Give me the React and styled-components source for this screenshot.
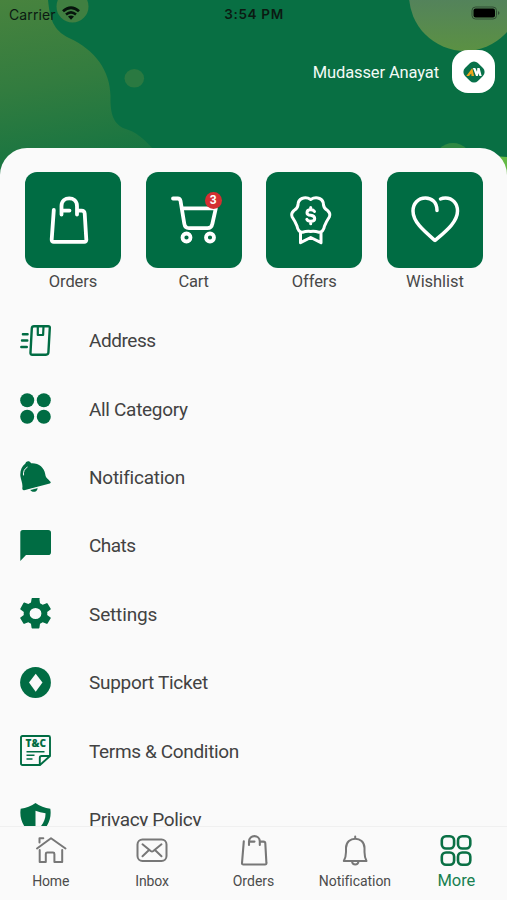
import styled, { createGlobalStyle, css } from 'styled-components';

const GlobalStyle = createGlobalStyle`
    * {
        box-sizing: border-box;
    }

    body {
        margin: 0;
        background-color: #fafafa;
        font-family: Roboto, 'Noto Sans', sans-serif;
    }
`;

const Screen = styled.div`
    position: relative;
    width: 507px;
    height: 900px;
    display: flex;
    flex-direction: column;
    overflow: hidden;
    background-color: #086f43;
`;

const HeaderArt = styled.svg`
    position: absolute;
    top: 0;
    left: 0;
`;

const StatusBar = styled.div`
    position: relative;
    height: 28px;
    padding: 0 6px 0 9px;
    display: grid;
    grid-template-columns: 1fr auto 1fr;
    align-items: center;
    font-family: Inter, sans-serif;
    color: #0b1a12;
`;

const Carrier = styled.div`
    display: flex;
    align-items: center;
    gap: 6px;
    font-size: 14px;
    letter-spacing: 0.1px;

    svg {
        margin-top: -3px;
    }
`;

const Clock = styled.div`
    font-size: 13.5px;
    font-weight: 600;
    letter-spacing: 0.65px;
    margin-right: 2px;
`;

const Battery = styled.svg`
    justify-self: end;
    margin-top: -2px;
`;

const Profile = styled.div`
    position: relative;
    height: 120px;
    padding: 21px 12px 0 0;
    display: flex;
    justify-content: flex-end;
    gap: 13px;
`;

const UserName = styled.div`
    line-height: 47px;
    font-size: 16.5px;
    letter-spacing: ${props => props.$spacing || 0}px;
    color: #f3faf6;
`;

const Avatar = styled.div`
    width: 43px;
    height: 43px;
    margin-top: 1px;
    display: flex;
    align-items: center;
    justify-content: center;
    border-radius: 16px;
    background-color: white;
`;

const Panel = styled.div`
    position: relative;
    flex: 1;
    min-height: 0;
    display: flex;
    flex-direction: column;
    border-radius: 27px 27px 0 0;
    background-color: #fafafa;
    overflow: hidden;
`;

const Tiles = styled.div`
    flex: none;
    height: 158px;
    padding: 24px 24px 0 25px;
    display: flex;
    justify-content: space-between;
`;

const TileItem = styled.div`
    width: 96px;
    display: flex;
    flex-direction: column;
    align-items: center;
`;

const Tile = styled.div`
    position: relative;
    width: 96px;
    height: 96px;
    border-radius: 12px;
    background-color: #006c43;
`;

const Badge = styled.div`
    position: absolute;
    top: 20px;
    left: 59px;
    width: 17px;
    height: 17px;
    border-radius: 50%;
    background-color: #d32f32;
    color: white;
    font-size: 12px;
    font-weight: 700;
    line-height: 17px;
    text-align: center;
`;

const TileLabel = styled.div`
    line-height: 28px;
    white-space: nowrap;
    font-size: 16.5px;
    letter-spacing: ${props => props.$spacing || 0}px;
    color: #484848;
`;

const List = styled.div`
    flex: 1;
    min-height: 0;
    overflow: hidden;
`;

const Row = styled.div`
    height: 68.4px;
    padding-left: 20px;
    display: flex;
    align-items: center;
    gap: 38px;
    color: #006c43;
`;

const RowLabel = styled.div`
    padding-top: 1px;
    white-space: nowrap;
    font-size: 19px;
    letter-spacing: ${props => props.$spacing || 0}px;
    color: #424242;
`;

const NavBar = styled.div`
    flex: none;
    height: 74px;
    display: flex;
    border-top: 1px solid #f0f0f0;
    background-color: #fafafa;
`;

const NavItem = styled.div`
    flex: 1;
    display: flex;
    flex-direction: column;
    align-items: center;
    padding-top: 7px;
    color: #777;

    ${props => props.$active && css`
        color: #0a7045;
    `}
`;

const NavLabel = styled.div`
    margin-top: 2px;
    line-height: 22px;
    white-space: nowrap;
    font-size: ${props => props.$active ? 16.5 : 14}px;
    letter-spacing: ${props => props.$spacing || 0}px;
    color: ${props => props.$active ? '#188050' : '#4c4c4c'};
`;

const TileIcon = ({children}) => (
    <svg width="96" height="96" viewBox="0 0 96 96" fill="none" stroke="white" strokeWidth="3.8" strokeLinecap="round" strokeLinejoin="round">
        {children}
    </svg>
);

const RowIcon = ({children}) => (
    <svg width="31" height="31" viewBox="0 0 31 31" fill="currentColor">{children}</svg>
);

const NavIcon = ({children, width = 2}) => (
    <svg width="34" height="34" viewBox="0 0 34 34" fill="none" stroke="currentColor" strokeWidth={width} strokeLinecap="round" strokeLinejoin="round">
        {children}
    </svg>
);

const tiles = [
    {
        label: 'Orders',
        spacing: -0.1,
        icon: <TileIcon>
            <path d="M28.8 38 L26.7 67.5 Q26.5 69.8 28.8 69.8 H59.2 Q61.5 69.8 61.3 67.5 L59.7 41.5 Q59.5 38.6 56.5 38.6 H52.7 M36.5 42.5 V34 C36.5 23.8 52 23.8 52 34 V42.5 M38 38.6 H44.5" />
        </TileIcon>,
    },
    {
        label: 'Cart',
        spacing: -0.2,
        badge: 3,
        icon: <TileIcon>
            <path d="M27 26.5 H31.8 Q34 26.5 34.5 28.8 L38.3 51.8 Q39 56.2 43 56.2 H61.5 Q65.5 56.2 66.3 52 L69.8 36.3 H36" />
            <circle cx="40.5" cy="65.5" r="4" />
            <circle cx="64" cy="65.5" r="4" />
        </TileIcon>,
    },
    {
        label: 'Offers',
        spacing: -0.1,
        icon: <TileIcon>
            <path strokeWidth="3" d="M44.7 27.5 Q49 24.8 53.5 26.5 Q57.5 28.2 57.5 33 Q58 36.5 61.5 38.5 Q65 41.5 63.3 45 Q60 50 58.5 54 Q57.5 60 53 60.3 Q49 59 44.7 59.5 Q40.5 59 36.5 60.3 Q32 60 31 54 Q29.5 50 26.2 45 Q24.5 41.5 28 38.5 Q31.5 36.5 32 33 Q32 28.2 36 26.5 Q40.5 24.8 44.7 27.5 Z" />
            <path strokeWidth="3" d="M34.5 61 V70.7 L44.7 65.5 L55 70.7 V61" />
            <path strokeWidth="3" d="M48.5 39.5 Q47.5 37.8 44.7 37.8 Q41 37.8 41 40.7 Q41 43 44.7 43.2 Q48.7 43.8 48.7 46.5 Q48.7 49.3 44.7 49.3 Q41.5 49.3 40.8 47.3 M44.7 35.5 V37.5 M44.7 49.5 V51.7" />
        </TileIcon>,
    },
    {
        label: 'Wishlist',
        spacing: -0.05,
        icon: <TileIcon>
            <path strokeWidth="3.5" d="M50 38.5 C50 30 44.5 26 38.5 26 C31 26 26 31.5 26 39 C26 50 37 59 48 68.5 C59 59 70.5 50 70.5 39 C70.5 31.5 65.5 26 58.5 26 Q55.5 26 53.5 27" />
        </TileIcon>,
    },
];

const rows = [
    {
        label: 'Address',
        spacing: -0.45,
        icon: <RowIcon>
            <g fill="none" stroke="currentColor" strokeWidth="2.4" strokeLinejoin="round">
                <path d="M14 1.2 H28.2 Q29.9 1.2 29.8 3 L28.4 27.5 Q28.2 29.7 26 29.7 H12.3 Q10.3 29.7 10.5 27.6 L11.8 3.4 Q12 1.2 14 1.2 Z" />
                <path d="M17.8 1.5 V10 H23.1 L23.5 1.5" strokeWidth="2.2" />
                <path d="M2.9 9.2 H7.6 M2 15.5 H7.3 M1.3 22 H6.8" strokeLinecap="round" />
            </g>
        </RowIcon>,
    },
    {
        label: 'All Category',
        spacing: -0.32,
        icon: <RowIcon>
            <circle cx="7.2" cy="7.2" r="7" />
            <circle cx="23.8" cy="7.2" r="7" />
            <circle cx="7.2" cy="23.8" r="7" />
            <circle cx="23.8" cy="23.8" r="7" />
        </RowIcon>,
    },
    {
        label: 'Notification',
        spacing: -0.25,
        icon: <RowIcon>
            <path d="M5.2 2.8 Q5.7 -.2 8.8 .3 Q10.5 .8 11 2.3 C18.5 1.7 24.3 6.5 25.2 13 C25.7 17.3 28.5 18.2 30.5 20.8 Q31.2 22 29.8 22.6 L4.2 29.2 Q2.2 29.5 2.3 27.2 C3 22.5 1 19.5 .4 15.2 C-.1 10 1.5 5.7 5.2 2.8 Z" />
            <path d="M10.3 28.7 L17.6 26.8 C17.7 31.5 11.5 32 10.3 28.7 Z" />
            <path d="M3.5 14 Q2.8 8.8 7.2 6.2" fill="none" stroke="#fafafa" strokeWidth="1" strokeLinecap="round" />
            <path d="M8.6 29.1 L18.8 26.4" stroke="#fafafa" strokeWidth=".7" />
        </RowIcon>,
    },
    {
        label: 'Chats',
        spacing: -0.55,
        icon: <RowIcon>
            <path d="M2.8 0 H28.2 Q31 0 31 2.8 V22.2 Q31 25 28.2 25 H6 L.3 31 V2.8 Q.3 0 2.8 0 Z" />
        </RowIcon>,
    },
    {
        label: 'Settings',
        spacing: -0.15,
        icon: <svg width="31" height="31" viewBox="2.55 2 18.9 20" preserveAspectRatio="none" fill="currentColor">
            <path d="M19.14 12.94c.04-.3.06-.61.06-.94 0-.32-.02-.64-.07-.94l2.03-1.58a.49.49 0 0 0 .12-.61l-1.92-3.32a.49.49 0 0 0-.59-.22l-2.39.96a7 7 0 0 0-1.62-.94l-.36-2.54A.48.48 0 0 0 13.92 2h-3.84a.48.48 0 0 0-.47.41l-.36 2.54c-.59.24-1.13.57-1.62.94l-2.39-.96a.49.49 0 0 0-.59.22L2.74 8.87a.48.48 0 0 0 .12.61l2.03 1.58c-.05.3-.09.63-.09.94s.02.64.07.94l-2.03 1.58a.49.49 0 0 0-.12.61l1.92 3.32c.12.22.37.29.59.22l2.39-.96c.5.38 1.03.7 1.62.94l.36 2.54c.05.24.24.41.48.41h3.84c.24 0 .44-.17.47-.41l.36-2.54c.59-.24 1.13-.56 1.62-.94l2.39.96c.22.08.47 0 .59-.22l1.92-3.32a.48.48 0 0 0-.12-.61zM12 15.6a3.6 3.6 0 1 1 0-7.2 3.6 3.6 0 0 1 0 7.2" />
        </svg>,
    },
    {
        label: 'Support Ticket',
        spacing: -0.3,
        icon: <RowIcon>
            <circle cx="15.5" cy="15.5" r="15.4" />
            <path d="M15.7 6.8 L22.5 15.6 L15.7 24.7 L9 15.6 Z" fill="#fafafa" />
        </RowIcon>,
    },
    {
        label: 'Terms & Condition',
        spacing: -0.35,
        icon: <RowIcon>
            <g fill="none" stroke="currentColor" strokeWidth="1.9" strokeLinejoin="round">
                <path d="M2.5 1 H28.5 Q30 1 30 2.5 V21 L20 30 H2.5 Q1 30 1 28.5 V2.5 Q1 1 2.5 1 Z M19.8 29.5 V22.8 Q19.8 21 21.6 21 H29.8" />
                <path d="M6.5 16.7 H24.5 M6.5 20.3 H14.5 M6.5 24 H12.5" strokeWidth="1.6" />
            </g>
            <text x="5.5" y="12" textLength="20.5" lengthAdjust="spacingAndGlyphs" fontFamily="Open Sans" fontSize="9.8" fontWeight="800">T&amp;C</text>
        </RowIcon>,
    },
    {
        label: 'Privacy Policy',
        spacing: -0.35,
        icon: <RowIcon>
            <path d="M15.5 0 Q22 4.8 30.3 5.8 C32 15.5 27.5 28 15.5 31 C3.5 28 -1 15.5 .7 5.8 Q9 4.8 15.5 0 Z" />
            <path d="M15.5 7.7 Q20 9.5 25.5 10.3 C25.8 17 22 24.5 15.5 26.8 Z" fill="#fafafa" />
        </RowIcon>,
    },
];

const navItems = [
    {
        label: 'Home',
        spacing: -0.15,
        icon: <NavIcon>
            <path d="M3 14.5 L17 4.2 L31.5 14.5 M5.5 8.5 V4.2 H9.3 M5.7 16 V28 H11.8 V20 Q11.8 18.6 13.2 18.6 H19 Q20.4 18.6 20.4 20 V28 H28.2 V16" />
        </NavIcon>,
    },
    {
        label: 'Inbox',
        spacing: -0.1,
        icon: <NavIcon>
            <rect x="2.5" y="5.5" width="29" height="21.5" rx="5" />
            <path d="M7.5 10.3 L15.7 17 Q17 18 18.3 17 L26.5 10.3 M7.5 22.2 L13.5 16.5 M26.5 22.2 L20.5 16.5" />
        </NavIcon>,
    },
    {
        label: 'Orders',
        spacing: 0,
        icon: <NavIcon width={2.1}>
            <path d="M6.8 7.3 L5 29 Q4.9 30.5 6.4 30.5 H28 Q29.6 30.5 29.4 29 L28.3 9.3 Q28.2 7.6 26.5 7.6 H23.2 M12 11 V7.5 C12 .3 22.8 .3 22.8 7.5 V11 M12.5 7.6 H17.5" />
        </NavIcon>,
    },
    {
        label: 'Notification',
        spacing: -0.05,
        icon: <NavIcon width={2}>
            <path d="M17.2 2.5 V4.5 M5.8 27 Q8 23 8 18 V14 C8 1.5 26.5 1.5 26.5 14 V18 Q26.5 23 28.5 27 Z M14 27.5 C14.5 31.5 20 31.5 20.5 27.5" />
        </NavIcon>,
    },
    {
        label: 'More',
        spacing: -0.1,
        active: true,
        icon: <NavIcon width={2.6}>
            <rect x="2.8" y="2.2" width="12.3" height="12.3" rx="4.2" />
            <rect x="19" y="2.2" width="12.3" height="12.3" rx="4.2" />
            <rect x="2.8" y="18.5" width="12.3" height="12.3" rx="4.2" />
            <rect x="19" y="18.5" width="12.3" height="12.3" rx="4.2" />
        </NavIcon>,
    },
];

const App = () => {
    return (
        <Screen>
            <GlobalStyle />
            <HeaderArt width="507" height="180" viewBox="0 0 507 180">
                <defs>
                    <linearGradient id="blob" x1="0" y1="0" x2="0.15" y2="1">
                        <stop offset="0" stopColor="#48833e" />
                        <stop offset="0.5" stopColor="#327c3f" />
                        <stop offset="1" stopColor="#157442" />
                    </linearGradient>
                    <linearGradient id="sun" x1="0" y1="0" x2="0" y2="1">
                        <stop offset="0.45" stopColor="#528060" />
                        <stop offset="1" stopColor="#5b9143" />
                    </linearGradient>
                </defs>
                <path d="M0 0 H48 C50 19 53 30 69 38 C95 50 110 70 110.5 96 C110 115 114 123 123 128 C137 132 144 139 154 150 V180 H0 Z" fill="url(#blob)" />
                <circle cx="72.5" cy="6.5" r="16" fill="#407f41" />
                <ellipse cx="134.3" cy="78.3" rx="9.8" ry="9.3" fill="#2a7941" />
                <circle cx="465" cy="-5" r="56" fill="url(#sun)" />
                <circle cx="453" cy="162" r="19" fill="#2f8843" />
                <path d="M470 180 V158 Q490 155 507 157 V180 Z" fill="#64b945" />
            </HeaderArt>
            <StatusBar>
                <Carrier>
                    Carrier
                    <svg width="18" height="14" viewBox="0 0 18 14" fill="none" stroke="#06140c" strokeWidth="2.8">
                        <path d="M1 5.2 Q9 -1.8 17 5.2" />
                        <path d="M4 8.5 Q9 4.2 14 8.5" strokeWidth="2.5" />
                        <path d="M6 10.6 Q9 8.2 12 10.6 L9 13.8 Z" fill="#06140c" stroke="none" />
                    </svg>
                </Carrier>
                <Clock>3:54 PM</Clock>
                <Battery width="30" height="14" viewBox="0 0 30 14">
                    <rect x="1" y="1" width="24.5" height="12" rx="3.5" fill="none" stroke="#304c35" />
                    <rect x="2.5" y="2.5" width="21.5" height="9" rx="2" fill="black" />
                    <path d="M27 5 Q30 7 27 9 Z" fill="#304c35" />
                </Battery>
            </StatusBar>
            <Profile>
                <UserName $spacing={-0.12}>Mudasser Anayat</UserName>
                <Avatar>
                    <svg width="22" height="22" viewBox="0 0 22 22">
                        <rect x="1.9" y="1.9" width="18.2" height="18.2" rx="5.5" fill="#08714a" transform="rotate(45 11 11)" />
                        <path d="M3.3 15 L9.3 7 L11 15 H8.5 L8.3 12.6 L6 15 Z" fill="#f0a71d" />
                        <path d="M9.9 7 H12.3 L14 10.7 L14.3 7 H16.6 L18.7 15 H16.4 L15.5 12.2 L14.8 15 H13 Z" fill="white" />
                    </svg>
                </Avatar>
            </Profile>
            <Panel>
                <Tiles>
                    {tiles.map(tile => (
                        <TileItem key={tile.label}>
                            <Tile>
                                {tile.icon}
                                {tile.badge && <Badge>{tile.badge}</Badge>}
                            </Tile>
                            <TileLabel $spacing={tile.spacing}>{tile.label}</TileLabel>
                        </TileItem>
                    ))}
                </Tiles>
                <List>
                    {rows.map(row => (
                        <Row key={row.label}>
                            {row.icon}
                            <RowLabel $spacing={row.spacing}>{row.label}</RowLabel>
                        </Row>
                    ))}
                </List>
                <NavBar>
                    {navItems.map(item => (
                        <NavItem key={item.label} $active={item.active}>
                            {item.icon}
                            <NavLabel $active={item.active} $spacing={item.spacing}>{item.label}</NavLabel>
                        </NavItem>
                    ))}
                </NavBar>
            </Panel>
        </Screen>
    );
};

export default App
